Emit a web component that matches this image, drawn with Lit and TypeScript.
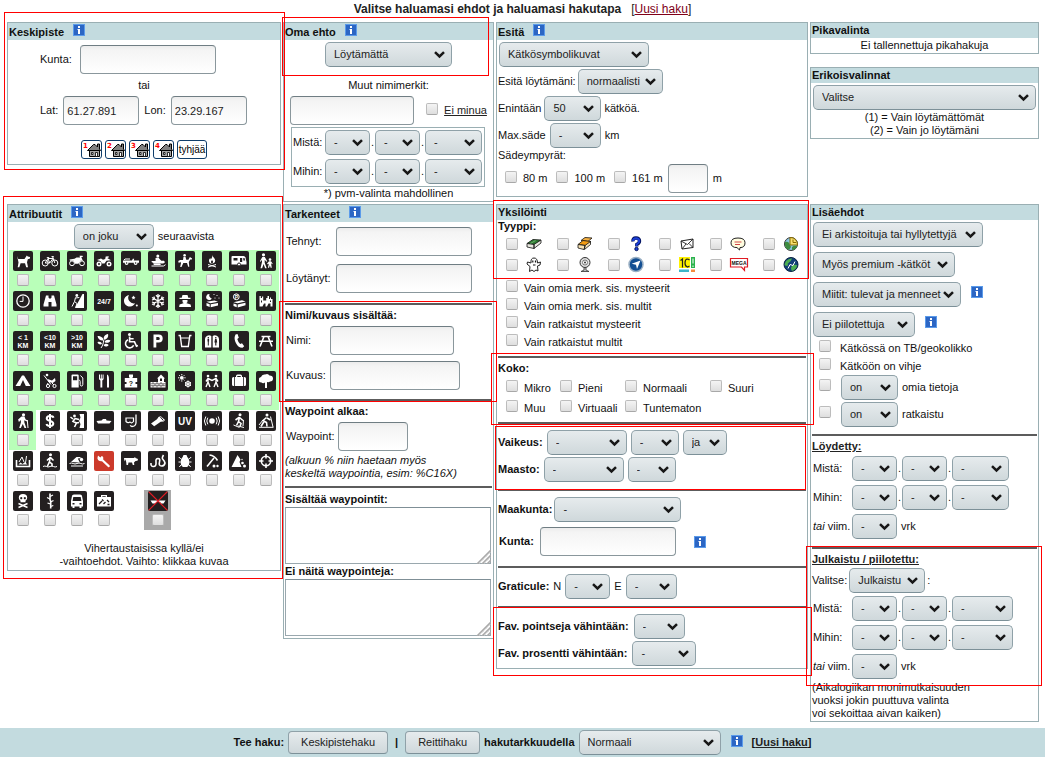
import { LitElement, html, svg, css, nothing } from "lit";
import type { TemplateResult } from "lit";
import { customElement } from "lit/decorators.js";

type Art = ReturnType<typeof svg>;

/* White-on-black attribute pictograms, drawn on a 20 x 20 tile. */
const ART: Record<string, Art> = {
  koira: svg`<path d="M4 5l1.300 3h6.200l2.300-3.500 1 1 2.200.6v1.400l-2.200.7-.8 3.100 1 5h-1.800l-1.200-4H7.600L6.300 16.300H4.700l.8-4.800-.6-3z"/>`,
  polkupyora: svg`<g class="s"><circle cx="5.200" cy="12" r="3"/><circle cx="14.800" cy="12" r="3"/><path d="M5.200 12L8 7.500h5l-3.300 4.500H5.200M8 7.500L9.700 12M12.600 5.600l2.200 6.400M11.500 5.600h2.300M6.800 6.600h2.400"/></g>`,
  moottoripyora: svg`<circle class="s" cx="5" cy="12.300" r="2.400"/><circle class="s" cx="15" cy="12.300" r="2.400"/><path d="M2.500 8.500l5-.8 2-1.300h3.500l-.5-1.600h3l.4 1.200h-1.600l1.600 4-2-.4-2.500 3.200H8L6.500 9.700H3z"/>`,
  monkija: svg`<circle cx="5" cy="13" r="2.500"/><circle cx="15" cy="13" r="2.500"/><path d="M3 9l4-1.500 2 1.200 2.200-.7.5-2.500 3-.3v1.300l-1.500.5 3.800 2.300-4.500.5-2 2.700H8L6.400 10z"/><circle cx="5" cy="13" r="1" fill="#231f20"/><circle cx="15" cy="13" r="1" fill="#231f20"/>`,
  jeeppi: svg`<path d="M2 9.500h9l.8-1.800h1.400L12.800 9.500H18v2.300H2z"/><path class="s" d="M3 9l1-1h5"/><circle cx="5.600" cy="12" r="1.900"/><circle cx="14.600" cy="12" r="1.900"/><circle cx="5.600" cy="12" r=".8" fill="#231f20"/><circle cx="14.600" cy="12" r=".8" fill="#231f20"/>`,
  moottorikelkka: svg`<circle cx="9.800" cy="5" r="1.500"/><path d="M7.500 7l2.800-.5 3 3.200h2.700l1 1.600-1.700 1.300H6.500L3.500 11l.3-1h3.800z"/><path class="s" d="M3.500 15h12l2-1.300"/><path d="M5 12.600h7l1 1.500H6z"/>`,
  hevonen: svg`<circle cx="9.600" cy="4.200" r="1.300"/><path d="M8.500 5.700h2l.7 3h2.200l1.500-2.700 2.200 1.400-.3 1.200-1.500-.2-1.500 2.700.5 4.700h-1.100l-1.200-3.800H8.300L6.500 16H5.200l.8-4-.8-1.300-1.300 1.600-.7-2.200 2-1.200H8z"/>`,
  nuotio: svg`<path d="M10.400 4c.2 2.200 2.800 3.100 2.800 5.500 0 1.800-1.300 3.100-3.200 3.100s-3-1.200-3-2.900c0-1.100.5-1.700 1.200-2.600l.6 1.400C9.800 7 10.600 5.800 10.400 4z"/><path class="s" d="M6 13.500l8 2.500M14 13.500l-8 2.500"/><path d="M10 9c.9 1.100 1.100 1.500 1.100 2.100 0 1.500-2.200 1.500-2.200 0 0-.6.500-1.100 1.100-2.100z" fill="#231f20"/>`,
  asuntoauto: svg`<path d="M2.500 6q0-1 1-1h11q1.500 0 2 1.500l1 4.500v2.500H2.500z"/><path d="M4.500 7h4v2.600h-4zM11 7h2.200v4H11z" fill="#231f20"/><path d="M14.300 7h1.200l.7 2.500h-1.900z" fill="#231f20"/><circle cx="10" cy="13.500" r="1.500" stroke="#231f20"/>`,
  lapset: svg`<circle cx="7.500" cy="3.800" r="1.600"/><path d="M6.300 6h2.500l2.400 4.200-.8.500-1.700-2v3l2 5.600H9.100L7.600 13l-1.500 4.300H4.500L6 11V8.800l-1.300 2-.8-.5z"/><circle cx="14" cy="8.600" r="1.300"/><path d="M13 10.300h2l1.700 2.500-.7.500-1-1.200.8 4.700h-1.200l-.7-2.600-.8 2.600h-1.200l.9-4-1.500.4-.2-.8z"/>`,
  kello: svg`<circle class="s" cx="10" cy="10" r="6.200" stroke-width="1.300"/><path class="s" d="M10 5.500V10.400H6.700"/>`,
  kiikari: svg`<path d="M6 4.500h2.500v2l.7 1h1.600l.7-1v-2H14l2.500 9v2h-5v-4.500H8.500v4.500h-5v-2z"/>`,
  rinne: svg`<path d="M15.500 3H17v14H8z"/><circle cx="9.800" cy="4.500" r="1.400"/><path class="s" d="M8.500 6.500l-1 4 2.500 2-1.300 4M7.500 10.500L5 15.500M8.500 7l3.800-.5"/>`,
  aina: svg`<text x="10" y="12.700" font-size="7" text-anchor="middle">24/7</text>`,
  yo: svg`<path d="M8 4a5.800 5.800 0 1 0 6 8.300A5.600 5.600 0 0 1 8 4z"/><path d="M12.500 4.500l.6 1.300 1.400.2-1 1 .2 1.400-1.200-.7-1.200.7.200-1.400-1-1 1.400-.2z"/><circle cx="15.800" cy="14.500" r="1"/>`,
  lumi: svg`<path class="s" stroke-width="1.300" d="M10 3v14M4 6.500l12 7M16 6.500l-12 7M8 4.200l2 2 2-2M8 15.800l2-2 2 2M4 9l2.500-.900L6 5.500M16 11l-2.500.900.5 2.600M4 11l2.500.900L6 14.500M16 9l-2.500-.900.5-2.600"/>`,
  hattu: svg`<path d="M7.500 4h5l.8 2.700h2.200v1.300h-11V6.700h2.200z"/><path d="M7.500 9h5v1.400q0 1.500-1.500 1.500l4.600 1.600.5 2.500h-12l.5-2.500L9 11.900q-1.500 0-1.500-1.500z"/>`,
  yokatko: svg`<path d="M7.500 3a3 3 0 1 0 2.300 4.500A3.200 3.200 0 0 1 7.500 3z"/><circle cx="12" cy="3.500" r=".6"/><circle cx="15" cy="4.500" r=".6"/><circle cx="13" cy="7" r=".6"/><circle cx="17" cy="7" r=".6"/><path d="M4.500 10.800l8-1.300 3.500 1.300-7.500 1.500zM4.500 12l3.200 1.300v2.700l-3.200-1.300zM8.700 13.300l7.300-1.300v2.500l-7.300 1.800z"/>`,
  parkkikatko: svg`<circle class="s" cx="7.300" cy="5.800" r="2.900"/><text x="7.400" y="7.800" font-size="5" text-anchor="middle">P</text><path d="M4.500 11.300l8.500-2 3.500 1.200-8 1.800zM4.500 12.500l3.200 1v2.800l-3.200-1.300zM8.700 13.500l7.800-1.800v2.500l-7.800 2.300z"/>`,
  rauniot: svg`<path d="M3.500 5h1.300v2h1.200V5.500h1.200V9.500h3V7h1.300V5h1.500v3h1V6.500h1V8H16.500v7.500h-2v-3h-2l-1.500 3h-1.500v-3H8L6.500 15.500h-3z"/><path d="M5 9.500h1v2H5zM14 9.500h1v1.500h-1z" fill="#231f20"/>`,
  km1: svg`<text x="10" y="8.500" font-size="7" text-anchor="middle">&lt; 1</text><text x="10" y="17" font-size="7" text-anchor="middle">KM</text>`,
  km10: svg`<text x="10" y="8.500" font-size="7" text-anchor="middle">&lt;10</text><text x="10" y="17" font-size="7" text-anchor="middle">KM</text>`,
  yli10: svg`<text x="10" y="8.500" font-size="7" text-anchor="middle">&gt;10</text><text x="10" y="17" font-size="7" text-anchor="middle">KM</text>`,
  kasvi: svg`<path d="M9.500 9.500C7 10 4 8.500 3.500 5 7 5 9.500 6.500 9.500 9.500zM10 8.800C9 6 11 3.500 14 3c.8 3-1 5.500-4 5.800zM10.500 11c1-2.500 4-3 6-1.500-1 2.500-4 3-6 1.500zM9.700 14.500c.5-2 3-2.500 5-.5-1.500 2-4 2-5 .5zM8 13c-2 1-4 0-4.500-1.800C5.500 10.300 7.500 11 8 13z"/><path class="s" d="M9.800 9c-.6 3-.6 5-2.800 8"/>`,
  pyoratuoli: svg`<circle cx="8.500" cy="3.600" r="1.500"/><path class="s b" d="M8.600 5.500v5.300h4.900l2 4.400 1.400-.6M8.600 7.800h4M7 8.800a4.200 4.200 0 1 0 5.600 5.400"/>`,
  parkki: svg`<path fill-rule="evenodd" d="M5.500 3.500h5.200q4 0 4 4t-4 4H8.300v5H5.500zM8.300 6v3h2q1.500 0 1.500-1.500T10.300 6z"/>`,
  juoma: svg`<path class="s" stroke-width="1.400" d="M3.500 4.500h1.700l1.500 11h6.600l1.500-11h1.700"/><path class="s" d="M6 7h8"/>`,
  wc: svg`<path d="M3 16.500V8a4 4 0 0 1 6.300-3v11.500zM10.700 16.500V5A4 4 0 0 1 17 8v8.500z"/><path d="M5.500 8h1.600v2.500h-.3v4h-1v-4h-.3zM13 8h1.600l.6 3.500h-.8v3h-1.200v-3h-.8zM5.700 6h1.200v1.400H5.700zM13.200 6h1.200v1.400h-1.200z" fill="#231f20"/>`,
  puhelin: svg`<path d="M6.500 3.500l2-.5 1.300 3.700-1.500 1.200q.7 3 2.900 5l1.800-.7 2.200 3-1.700 1.600Q9.500 17 7 12.300T6.500 3.500z"/>`,
  piknik: svg`<path class="s b" d="M5.500 5.500h9M3 10.200h14M8 5.500l-4 10M12 5.500l4 10"/>`,
  teltta: svg`<path fill-rule="evenodd" d="M9 4.500h2l6.500 10.500h-15zM10 9l-2.800 6h5.600z"/>`,
  rattaat: svg`<circle cx="7" cy="4" r="1.300"/><path d="M7.500 8l4.500 1.500 3-2.500.5 3-2.700 2-4.300-1z"/><path class="s" d="M4 4.500l7 9M8 12l-1 2M12 12l2 2"/><circle class="s" cx="8" cy="15" r="1.600"/><circle class="s" cx="14.500" cy="15" r="1.600"/>`,
  polttoaine: svg`<path fill-rule="evenodd" d="M4.500 4.500q0-1 1-1h5.200q1 0 1 1V16.500H4.500zM6 5.200v4h4.200v-4z"/><path class="s" d="M11.700 9q1.500 0 1.500 1.500v3q0 1.500 1.300 1.500t1.300-1.500V7L13.500 4.500"/>`,
  ruoka: svg`<path d="M5 3.500h1v4h.8v-4h1v4h.8v-4h1V8.300L8.300 9.500v7H6.400v-7L5 8.300zM13 3.500q2 .5 2 5v8h-2z"/>`,
  palapeli: svg`<path d="M8 3.500h4V6l-.8 1h5v4h-1.700v2h1.700v3.500H3.800V13h1.700v-2H3.800V7h5L8 6z"/><text x="10" y="14.500" font-size="7" text-anchor="middle" fill="#231f20">?</text>`,
  talo: svg`<path d="M9 7.500l4-4 4 4h-1v3.500h-6V7.500z"/><path d="M12 7.500h2v2.500h-2z" fill="#231f20"/><path d="M2.500 11h15v5.500h-15z"/><path d="M2.500 12.800h15M2.500 14.700h15M5 11v1.800M9 11v1.800M13 11v1.800M7 12.800v1.900M11 12.800v1.900M15 12.800v1.900M5 14.700v1.800M9 14.700v1.800M13 14.700v1.800" stroke="#231f20" stroke-width=".6"/>`,
  kausi: svg`<circle cx="6.800" cy="6.800" r="1.900"/><path class="s" d="M6.800 3v1.300M6.800 9.300v1.300M3 6.800h1.300M9.300 6.800h1.300M4.200 4.200l.8.800M8.600 8.600l.8.800M9.400 4.200l-.8.800M4.200 9.400l.8-.8"/><path class="s" d="M13 9.500v7M10 11.300l6 3.500M16 11.300l-6 3.500"/><circle class="s" cx="13" cy="13" r="2.500"/>`,
  seura: svg`<circle cx="6" cy="5" r="1.300"/><circle cx="14" cy="5" r="1.300"/><path class="s" stroke-width="1.400" d="M6 7v4l-2 5M6 11l2 5M14 7v4l-2 5M14 11l2 5M4 10.500L6 7.500l4 2 4-2 2 3"/>`,
  laukku: svg`<path fill-rule="evenodd" d="M7 5q0-1.500 1.500-1.500h3Q13 3.500 13 5v1h2.500q1.500 0 1.500 1.500v6q0 1.500-1.500 1.500h-11Q3 15 3 13.500v-6Q3 6 4.500 6H7zM8.300 5v1h3.400V5z"/><path d="M5.500 6v9M14.500 6v9" stroke="#231f20" stroke-width=".8"/>`,
  puu: svg`<path d="M9 17v-5.500Q7 13 5.500 11.500 2.500 11.500 3 9q-.5-2.500 2-3Q6 3 9 3.500q3-1.500 4.500 1Q17 4.500 17 7.500q0 3-3 3-1 1-3 .5V17z"/>`,
  retki: svg`<circle cx="10.500" cy="3.800" r="1.600"/><path d="M8.500 5.500h3l1 2.800 2 1.200-.5 1-2.700-1.300v2l2 5.800h-1.800L9.800 13l-2 4H6.200l1.700-5.500V9l-2 2-.8-2.500z"/><path class="s" d="M14.300 9l.7 8"/>`,
  maksu: svg`<path class="s" stroke-width="2" d="M13.500 6.700Q13 5 10 5T6.700 7.300q0 2 3.300 2.700t3.300 2.800Q13 15 10 15t-3.500-2M10 3v14"/>`,
  kiipeily: svg`<path d="M12.500 3h4.500v14h-4.500l1-4-1.500-3 1.500-3.500z"/><circle cx="7.500" cy="5" r="1.400"/><path class="s b" d="M8 7.500l-2 3 3.500 1.500L7.500 16M8 7.500l4 1M6 8L3.500 6M9.500 12l2.500-.5"/>`,
  vene: svg`<path d="M2.500 10l5-.5L9 8h3l.5 1.500 5 .5-2 2.500H4z"/>`,
  snorkkeli: svg`<path class="s" stroke-width="1.200" d="M5 7h7.500v3.500q-2 2.500-3.500.5-2 1.500-4-.500z"/><path class="s" stroke-width="1.300" d="M15 3.500v8.500q-.5 3.500-4 3.500L9 14.500"/>`,
  lamppu: svg`<path d="M3 12.500l6-4.200 1.500-2.300 2-1L17 9l-1.300 1.600-3 .2-6.500 4.500z"/><path d="M12 5.500l3.300 4" stroke="#231f20"/>`,
  uv: svg`<text x="10" y="13.500" font-size="10" text-anchor="middle">UV</text>`,
  majakka: svg`<circle cx="10" cy="10" r="2.800"/><path class="s" d="M5.800 6.700q-2 3.300 0 6.600M14.200 6.700q2 3.300 0 6.600M3.800 5.500q-2.800 4.500 0 9M16.200 5.500q2.800 4.500 0 9"/>`,
  lumikenka: svg`<circle cx="11" cy="3.700" r="1.500"/><path class="s b" d="M10.500 6l-1 4.500 2.500 2-1 3M9.500 10.500l-2 4M10 6.500L6.500 9M10.500 6.500l3.500 3"/><path class="s" d="M4.500 14l6 2.500M9 15l6 1.500M14.500 9l-.5 6"/>`,
  hiihto: svg`<circle cx="11" cy="4" r="1.500"/><path class="s b" d="M10.500 6.500L7 9.500l3.500 2 .5 4M8 10.500l-3 5M11 7l3.500 2"/><path class="s" d="M14.500 5.500L17 16M7 9L3 14M3 16.300h14.500"/>`,
  kahluu: svg`<path class="s b" d="M3.500 9v6.500h13V9"/><path d="M5.500 13.500l2-2 2 1.500 2.500-2 2.500 2.500z"/><path class="s" d="M6 11l3-5 2 5M13.500 5l-1 7"/>`,
  vesi: svg`<circle cx="10.500" cy="3.800" r="1.500"/><path class="s b" d="M10 6l-.5 5 2.500 2v2.500M9.500 10.500l-2.200 5M10 6.500L7 9.500M10.500 6.500l3 3"/><path class="s" d="M3 15.500q2-1 3.500 0t3.500 0 3.500 0 3.500 0"/>`,
  uinti: svg`<circle cx="14.500" cy="8.500" r="1.700"/><path d="M4 11l5.500-5h4v1.300l-2.700.3 2 3.900z"/><path class="s" d="M2.500 12.500q2-1 3.700 0t3.800 0 3.800 0 3.700 0M4 15h12"/>`,
  huolto: svg`<path d="M4 4.500l2.300 2L8 4.800q2 1.500 1.200 3.700l6.500 6q.6 2-1.400 1.700L8 10.200q-4 .4-4.600-2.900z"/>`,
  lehma: svg`<path d="M3 7h10l1-1 .5 1 2.500 1-.5 1.700-2 .3-1.500 1.500.3 2.500h-1.500l-.8-2.500h-3.500l-.5 2.500H5.500L5.200 11 4.300 8.300l-.8 2.200z"/>`,
  kaarme: svg`<path class="s b" d="M3 12q-.5 3.500 2.500 3.500 3 0 2.500-4.500-.5-3.500 2-3.500t1.500 3.500q-1 4 2 4t3.500-3q-.5-2-2-3.500t.5-4.500"/>`,
  punkki: svg`<path d="M8.500 4h3l.8 2q2.200 2 2.200 5t-2.300 5H7.800q-2.300-2-2.300-5t2.200-5z"/><path class="s" d="M5.800 8L3.800 6M14.200 8l2-2M5.500 11H3.500M14.500 11h2M6 14l-1.700 2M14 14l1.700 2"/>`,
  kaivos: svg`<path class="s b" d="M12 7l-7 8.500M7.500 4q5 .5 8 5.500"/><circle cx="12" cy="15" r="1.500"/><circle cx="15.500" cy="15" r="1.200"/>`,
  kivivyory: svg`<path d="M8.500 4l3 4.500-1 2.500 2 5H2.500z"/><circle cx="13.500" cy="12" r="1.300"/><circle cx="15.500" cy="15" r="1.500"/><circle cx="13" cy="8.500" r=".7"/>`,
  metsastys: svg`<circle class="s b" cx="10" cy="10" r="4.700"/><path class="s b" d="M10 3v4.500M10 12.500V17M3 10h4.500M12.500 10H17"/>`,
  kallo: svg`<path fill-rule="evenodd" d="M10 3q4.200 0 4.200 3.700 0 2-1.700 3v1.500h-5V9.700q-1.700-1-1.700-3Q5.800 3 10 3zM8.200 6a1.100 1.100 0 1 0 .1 0zM11.800 6a1.100 1.100 0 1 0 .1 0z"/><path class="s" stroke-width="1.400" d="M5.500 12.500l9 4M14.500 12.500l-9 4"/>`,
  piikit: svg`<path class="s b" d="M10 2.500v6l.7 2v7"/><path class="s" stroke-width="1.300" d="M10 5.500l3-1.500M10 8L7 6.500M10.500 11l3-1.500M10.500 13L7.500 12M10.500 15.500l2.800-1"/>`,
  bussi: svg`<path fill-rule="evenodd" d="M5 5q0-1.500 2-1.500h6q2 0 2 1.500l1 5v5.500h-1.500V17h-2v-1.500h-5V17h-2v-1.500H4V10zM6.300 6l-.7 4h8.800l-.7-4zM5.500 12v1.500h2V12zM12.500 12v1.500h2V12z"/>`,
  tyokalut: svg`<path fill-rule="evenodd" d="M7 6V4h6v2h4v9.500H3V6zM8.300 6h3.400V5.200H8.300z"/><path d="M5 13l3-3M9.500 13l2-2M8 8.500l1.500 1.500M13 9l2 2M13.500 13.500h2" stroke="#231f20" stroke-width="1.300"/>`,
  eivene: svg`<path d="M2.500 9.500h15l-2 3H13l-1-1.500H8.500L7.500 12.500h-3z"/><path d="M.5.500l19 19M19.500.500l-19 19" stroke="#e01b24" stroke-width="1.100"/>`,
};

const ROWS: string[][] = [
  ["koira", "polkupyora", "moottoripyora", "monkija", "jeeppi", "moottorikelkka", "hevonen", "nuotio", "asuntoauto", "lapset"],
  ["kello", "kiikari", "rinne", "aina", "yo", "lumi", "hattu", "yokatko", "parkkikatko", "rauniot"],
  ["km1", "km10", "yli10", "kasvi", "pyoratuoli", "parkki", "juoma", "wc", "puhelin", "piknik"],
  ["teltta", "rattaat", "polttoaine", "ruoka", "palapeli", "talo", "kausi", "seura", "laukku", "puu"],
  ["retki", "maksu", "kiipeily", "vene", "snorkkeli", "lamppu", "uv", "majakka", "lumikenka", "hiihto"],
  ["kahluu", "vesi", "uinti", "huolto", "lehma", "kaarme", "punkki", "kaivos", "kivivyory", "metsastys"],
  ["kallo", "piikit", "bussi", "tyokalut", "", "eivene"],
];

/* Cache type symbols, 16 x 16. */
const TYPES: [string, Art][] = [
  ["Tradi", svg`<path d="M1 7.500l6-4 8 .500-6 4.500z" fill="#2e7d32" stroke="#111" stroke-width=".8"/><path d="M1 7.500v3.500l7 1.500V8.500zM8 8.500v4l7-5.500V4z" fill="#e8e8e0" stroke="#111" stroke-width=".8"/><path d="M4.500 7.500l5-3" stroke="#6cae6c"/>`],
  ["Multi", svg`<path d="M4 4.500l4-3 7 .500-4 3.500z" fill="#f5b041" stroke="#111" stroke-width=".8"/><path d="M1 8.500l5-4 8 1-5 4z" fill="#f39c12" stroke="#111" stroke-width=".8"/><path d="M1 8.500v3.500l6 1.500 1-4zM8 9.500L7.500 13.500l6-5v-3z" fill="#f7e3b5" stroke="#111" stroke-width=".8"/>`],
  ["Mysteeri", svg`<path d="M5 5.500Q4.500 2 8 2t3.500 3Q11.500 7 8.800 8.500V10.500" fill="none" stroke="#00115c" stroke-width="3.400"/><path d="M5 5Q5 2.200 8 2.200t3.300 2.800Q11.300 7 8.600 8.500V10" fill="none" stroke="#1c3fd8" stroke-width="2"/><circle cx="8.500" cy="13" r="1.700" fill="#1c3fd8" stroke="#00115c"/>`],
  ["Kirje", svg`<path d="M2 5l12-2v8.500L3 13z" fill="#fff" stroke="#222"/><path d="M2 5l6.500 3.500L14 3M3 13l4-5M14 11.500L10 7.500" fill="none" stroke="#222" stroke-width=".9"/>`],
  ["Miitti", svg`<path d="M8 2q7 0 7 4.800t-5 4.800l-.5 2.400L7 11.600Q1 11.600 1 6.800T8 2z" fill="#fffde0" stroke="#222"/><path d="M4.500 6h7M5 8.500h5" stroke="#d04848"/>`],
  ["Earth", svg`<circle cx="8" cy="8" r="6.500" fill="#8bc4e0" stroke="#333"/><path d="M2 6q3-1 4 1t2 4q-2 4-4 2-3-3-2-7z" fill="#3d8b40"/><path d="M7 1.500q7 0 7.500 7.500H7z" fill="#f8e070" stroke="#8a6d00"/><path d="M10 3.500v3h3" fill="none" stroke="#8a6d00"/><path d="M9 14q4 0 5-4-3-1-5 1z" fill="#3d8b40"/>`],
  ["Virtuaali", svg`<path d="M5 6q-.5-5 3-5t3.500 5l3-1-.5 3-2.500 1 .5 5-2-1-2 1.500L6 13l-2.500 1.500L4 9.500 1 7l.5-2z" fill="#fff" stroke="#222"/><path d="M6.800 3.500v2M9.500 3.500v2M7 8h2.500" stroke="#111" stroke-width="1.200"/>`],
  ["Webcam", svg`<circle cx="8" cy="5.500" r="5" fill="#ddd" stroke="#333"/><circle cx="8" cy="5.500" r="2.500" fill="#fff" stroke="#777"/><circle cx="8" cy="5.500" r="1" fill="#333"/><path d="M7 10.500h2v2.500l3 1.500H4L7 13z" fill="#bbb" stroke="#333" stroke-width=".8"/>`],
  ["Wherigo", svg`<circle cx="8" cy="7.500" r="7" fill="#134f93" stroke="#9bb0c4" stroke-width="1.500"/><path d="M12.500 3.500L9 12l-1-4.300-4.300-.900z" fill="#fff"/>`],
  ["10 vuotta", svg`<path d="M0 0h11v11H0z" fill="#fff200"/><path d="M12 0h4v11h-4z" fill="#2bb24c"/><path d="M0 12.500h10v2.500H0z" fill="#3db5c8"/><path d="M12 12.500h4v2.500h-4z" fill="#f58a3c"/><path d="M1.500 3.500L3.500 2v8.500M10.500 3Q9.500 2 8 2 6 2.500 6 6t2.500 4l2-1" fill="none" stroke="#222" stroke-width="1.200"/><path d="M14 1.500v5M14 8.500v1.500" stroke="#fff"/>`],
  ["Mega", svg`<path d="M.5 1.500h17v8.500h-3v3.500L11.500 10H.5z" fill="#fff" stroke="#e01b24" stroke-width="1.200"/><text x="9" y="8" font-size="5" font-weight="bold" text-anchor="middle" fill="#111">MEGA</text>`],
  ["Lab", svg`<circle cx="8" cy="7.500" r="7" fill="#123f78" stroke="#0a2342"/><path d="M3 4Q6 1 9 1.500q-1 3-3 4t-1 3q-3 1-3.500-1zM9 14q-2-3 0-5t5-1q0 4-5 6z" fill="#4caf50"/><path d="M5 11.500l2-4 3 1 2-4" fill="none" stroke="#fff"/>`],
];

const infoIcon = html`<svg class="info" viewBox="0 0 12 12" role="img" aria-label="Ohje">
  <rect width="12" height="12" fill="#5b9bea"/><rect x="1" y="1" width="10" height="10" fill="#2c66c4"/>
  <path d="M5 2h2v2H5zM4.500 5H7v5H5V6h-.5z" fill="#fff"/></svg>`;

const mark = (name: string) => html`<span class="mark ${name}" aria-hidden="true"></span>`;

const head = (title: string, info = false) =>
  html`<h2 class="head ${info ? "tall" : ""}"><span>${title}</span>${info ? infoIcon : nothing}</h2>`;

const pick = (width: string, label: string, value = "-", id = "") =>
  html`<select class=${width} id=${id || nothing} aria-label=${label}><option>${value}</option></select>`;

const tick = (text: string | TemplateResult) =>
  html`<label class="tick"><input type="checkbox" /><span>${text}</span></label>`;

const dates = (label: string, last: string) => html`<div class="dates">
  <span class="datelabel">${label}</span>${pick("w45", `${label} päivä`)}<span class="dot">.</span>${pick("w45", `${label} kuukausi`)}<span class="dot">.</span>${pick(last, `${label} vuosi`)}
</div>`;

const area = (id: string) => html`<div class="area"><textarea id=${id}></textarea>
  <svg class="grip" viewBox="0 0 15 14" aria-hidden="true"><path d="M1 14L15 0M6 14l9-9M11 14l4-4" stroke="#aaa" stroke-width="1.600"/><path d="M3 14L15 2M8 14l7-7" stroke="#ccc" stroke-width=".8" stroke-dasharray="1 1"/></svg></div>`;

@customElement("app-root")
export class AppRoot extends LitElement {
  static styles = css`
    :host { display: block; background: #fff; color: #111; font: 11px/13px "Liberation Sans", Arial, sans-serif; }
    * { box-sizing: border-box; }
    a { color: #222; }
    .title { margin: 0 0 4px; font-size: 12px; line-height: 18px; color: #222; display: flex; justify-content: center; gap: 10px; }
    .title .new { font-weight: normal; }
    .title a { color: #800018; }
    .board { display: grid; grid-template-columns: 274fr 211fr 312fr 229fr; gap: 2px; padding: 0 6px 0 7px; align-items: start; }
    .stack { display: flex; flex-direction: column; gap: 13px; }
    .panel { position: relative; border: 1px solid #9aafb3; min-width: 0; padding-bottom: 1px; }
    .pb2 { padding-bottom: 2px; }
    .pb3 { padding-bottom: 3px; }
    .pb5 { padding-bottom: 5px; }
    .head { margin: 0; background: #c3dbdf; font-size: 11px; line-height: 15px; height: 15px; padding-left: 1px; display: flex; gap: 9px; align-items: flex-end; }
    .tall { height: 17px; }
    .tall .info { margin-bottom: 4px; }
    .info { width: 12px; height: 12px; flex: none; display: block; }
    .body { padding: 0 1px; }
    .row { display: flex; align-items: center; gap: 3px; white-space: nowrap; }
    .center { justify-content: center; text-align: center; }
    .indent { padding-left: 31px; }
    .pad1 { padding-left: 1px; }
    .line { border: 0; height: 2px; background: #5c5c5c; margin: 7px 0 0; }
    .m1 { margin-top: 1px; } .m2 { margin-top: 2px; } .m3 { margin-top: 3px; } .m4 { margin-top: 4px; }
    .m5 { margin-top: 5px; } .m6 { margin-top: 6px; } .m8 { margin-top: 8px; } .m9 { margin-top: 9px; }
    .m10 { margin-top: 10px; } .m12 { margin-top: 12px; } .m15 { margin-top: 15px; }
    .g2 { gap: 2px; } .g4 { gap: 4px; } .g5 { gap: 5px; } .g6 { gap: 6px; } .g8 { gap: 8px; } .g10 { gap: 10px; } .g12 { gap: 12px; }
    .sub { margin: 0; font-size: 11px; line-height: 13px; padding-top: 4px; }
    .sub15 { line-height: 15px; }
    .flush { padding-top: 0; }
    .under { text-decoration: underline; color: #222; }
    .group { position: relative; }
    select, input, textarea, button { font: inherit; color: #222; margin: 0; }
    select { appearance: none; height: 25px; padding: 0 0 0 8px; border: 1px solid #8fa1a8; border-bottom-color: #7c9098; border-radius: 5px; flex: none;
      background: url("data:image/svg+xml,%3Csvg xmlns='http://www.w3.org/2000/svg' width='11' height='8'%3E%3Cpath d='M1 1.200l4.500 4.300 4.500-4.300' fill='none' stroke='%23181818' stroke-width='2.500'/%3E%3C/svg%3E") no-repeat right 6px center, linear-gradient(#e6ebed, #cfd8db); }
    .text { height: 29px; padding: 0 3px; border: 1px solid #8a979c; border-top-color: #6f7d83; border-radius: 4px; flex: none; background: linear-gradient(#ececec, #f4f4f4 4px, #fff); }
    .w40 { width: 40px; } .w44 { width: 44px; } .w45 { width: 45px; } .w48 { width: 48px; } .w51 { width: 51px; } .w57 { width: 57px; }
    .w61 { width: 61px; } .w64 { width: 64px; } .w70 { width: 70px; } .w76 { width: 76px; } .w80 { width: 80px; } .w85 { width: 85px; }
    .w102 { width: 102px; } .w124 { width: 124px; } .w127 { width: 127px; } .w130 { width: 130px; } .w136 { width: 136px; }
    .w142 { width: 142px; } .w148 { width: 148px; } .w150 { width: 150px; } .w170 { width: 170px; }
    .wide { flex: 1; width: 0; margin: 0 1px; }
    input[type="checkbox"] { appearance: none; width: 12px; height: 12px; border: 1px solid #bcbcbc; border-bottom-color: #a8a8a8; border-radius: 2px; background: linear-gradient(#f4f4f4, #dedede); flex: none; display: block; }
    .tick { display: flex; align-items: center; gap: 6px; }
    .tick input { margin-bottom: 4px; }
    .ticks { padding-left: 8px; }
    .ticks .tick { height: 18px; }
    .circles { display: flex; align-items: center; gap: 9px; padding-left: 7px; white-space: nowrap; }
    .sizes { display: grid; grid-template-columns: 54px 65px 85px auto; grid-auto-rows: 20px; padding-left: 8px; }
    .types { display: grid; grid-template-columns: repeat(4, 51px) 53px auto; grid-auto-rows: 21px; padding-left: 8px; }
    .types .type { display: flex; align-items: center; gap: 8px; }
    .type svg { width: 16px; height: 16px; overflow: visible; }
    .homes { display: flex; justify-content: center; gap: 3px; }
    .home { width: 21px; height: 19px; padding: 0; border: 1px solid #0f3d6b; border-radius: 3px; background: #fff; }
    .home svg { display: block; width: 19px; height: 17px; }
    .clear { width: 30px; font-size: 10px; line-height: 15px; color: #000; }
    .datebox { border: 1px solid #9aafb3; width: 194px; margin: 2px auto 0 7px; padding: 2px 1px; display: flex; flex-direction: column; gap: 4px; }
    .dates { display: flex; align-items: center; }
    .datelabel { width: 32px; }
    .dot { width: 5px; text-align: center; }
    .wideDates { display: flex; flex-direction: column; gap: 4px; padding-left: 1px; }
    .wideDates .datelabel { width: 39px; }
    .unit { margin-left: 4px; }
    .attrs { width: 270px; margin: 1px auto 0 1px; display: grid; grid-template-columns: repeat(10, 27px); grid-auto-rows: 40px; }
    .cell { display: flex; flex-direction: column; align-items: center; padding-top: 1px; gap: 3px; }
    .cell.green { background: #b9ffb9; }
    .cell.grey { background: #a9a9a9; }
    .tile { width: 20px; height: 20px; border-radius: 2px; background: #231f20; fill: #fff; font: bold 7px/8px "Liberation Sans", Arial, sans-serif; display: block; }
    .tile.red { background: #cc3a2b; }
    .tile .s { fill: none; stroke: #fff; }
    .tile .b { stroke-width: 1.600; }
    .form { display: grid; align-items: center; justify-content: start; padding-left: 1px; }
    .makers { grid-template-columns: 50px auto; row-gap: 8px; }
    .names { grid-template-columns: 44px auto; row-gap: 6px; }
    .note { font-style: italic; }
    .area { position: relative; margin-right: 1px; }
    textarea { display: block; width: 100%; height: 57px; border: 1px solid #9aa8ae; border-top-color: #7f8f96; background: #fff; resize: none; }
    .grip { position: absolute; right: 0; bottom: 0; width: 15px; height: 14px; fill: none; }
    .picks { display: flex; flex-direction: column; gap: 5px; padding-left: 1px; }
    .picks .info { margin-bottom: 6px; }
    .away { margin-left: 12px; }
    .extras { padding-left: 7px; }
    .extras .tick { height: 18px; gap: 9px; }
    .extras .own { height: auto; gap: 10px; }
    .own input { margin-bottom: 6px; }
    .foot { margin-top: 6px; background: #c3dbdf; padding: 2px 0; font-weight: bold; display: flex; align-items: center; justify-content: center; gap: 4px; white-space: nowrap; }
    .foot select, .foot button { font-weight: normal; height: 25px; }
    .foot button { border: 1px solid #8fa1a8; border-bottom-color: #7c9098; border-radius: 4px; background: linear-gradient(#e6ebed, #cfd8db); padding: 0 12px; height: 23px; }
    .foot .info { margin: 0 5px 4px 6px; }
    .bar { padding: 0 3px; }
    .mark { position: absolute; border: 1px solid #f00; pointer-events: none; z-index: 1; }
    .mk-center { inset: -11px -5px -6px -4px; }
    .mk-own { inset: -6px 4px auto -2px; height: 59px; }
    .mk-attrs { inset: -9px -3px -9px -5px; }
    .mk-name { inset: -2px -5px -1px -6px; }
    .mk-type { inset: -5px -2px -4px -4px; }
    .mk-size { inset: -3px -8px -1px -7px; }
    .mk-terrain { inset: -4px 0 1px -3px; }
    .mk-fav { inset: 1px -6px -10px -5px; }
    .mk-date { inset: -1px -5px -7px -6px; }
  `;

  private homes() {
    return html`<div class="homes m15">
      ${[1, 2, 3, 4].map((n) => html`<button class="home" aria-label="Koti ${n}"><svg viewBox="0 0 19 17">
        <path d="M5.500 9.500L11.500 3.500h1.500l2.500 2.500V3h2v5l1 1.500z" fill="#808080" stroke="#000"/><path d="M7.500 9.500h10v6h-10z" fill="#a8a8a8" stroke="#000"/>
        <path d="M9.500 11.500h1.500v2H9.500zM13.500 11.500h2v4h-2z" fill="#fff" stroke="#000" stroke-width=".8"/>
        <text x="1" y="7" font-family="DejaVu Sans" font-size="7" font-weight="bold" fill="#f00">${n}</text></svg></button>`)}
      <button class="home clear">tyhjää</button>
    </div>`;
  }

  private attributes() {
    return html`<div class="attrs">${ROWS.map((row, r) => row.map((name, c) => {
      const tone = r < 4 || (r === 4 && c === 0) ? "green" : name === "eivene" ? "grey" : "";
      return html`<label class="cell ${tone}">${name ? html`<svg class="tile ${name === "huolto" ? "red" : ""}" viewBox="0 0 20 20" role="img" aria-label=${name}>${ART[name]}</svg><input type="checkbox" />` : nothing}</label>`;
    }))}</div>`;
  }

  render() {
    return html`
      <h1 class="title"><span>Valitse haluamasi ehdot ja haluamasi hakutapa</span><span class="new">[<a href="#uusi">Uusi haku</a>]</span></h1>
      <main class="board">
        <section class="panel pb5">${head("Keskipiste", true)}
          <div class="body">
            <div class="row indent g8 m5"><label for="kunta">Kunta:</label><input class="text w136" id="kunta" /></div>
            <div class="row center m5">tai</div>
            <div class="row indent g5 m4"><label for="lat">Lat:</label><input class="text w76" id="lat" value="61.27.891" /><label for="lon">Lon:</label><input class="text w76" id="lon" value="23.29.167" /></div>
            ${this.homes()}
          </div>${mark("mk-center")}
        </section>

        <section class="panel">${head("Oma ehto", true)}
          <div class="row center m2">${pick("w127", "Oma ehto", "Löytämättä")}</div>
          <div class="row center m12"><label for="muut">Muut nimimerkit:</label></div>
          <div class="row center g12 m4"><input class="text w124" id="muut" />${tick(html`<a href="#eiminua">Ei minua</a>`)}</div>
          <div class="datebox">${dates("Mistä:", "w57")}${dates("Mihin:", "w57")}</div>
          <div class="row center">*) pvm-valinta mahdollinen</div>
          ${mark("mk-own")}
        </section>

        <section class="panel pb3">${head("Esitä", true)}
          <div class="body">
            <div class="row pad1 m2">${pick("w150", "Esitä", "Kätkösymbolikuvat")}</div>
            <div class="row g2 m2"><label for="loyt">Esitä löytämäni:</label>${pick("w85", "Esitä löytämäni", "normaalisti", "loyt")}</div>
            <div class="row m2"><label for="max">Enintään</label>${pick("w57", "Enintään", "50", "max")}<span>kätköä.</span></div>
            <div class="row g4 m2"><label for="sade">Max.säde</label>${pick("w51", "Max.säde", "-", "sade")}<span>km</span></div>
            <div class="row m1">Sädeympyrät:</div>
            <div class="circles m2">${tick("80 m")}${tick("100 m")}<span class="row g5">${tick("161 m")}<label class="row g5"><input class="text w40" aria-label="Oma säde" />m</label></span></div>
          </div>
        </section>

        <div class="stack">
          <section class="panel">${head("Pikavalinta")}<div class="row center m1">Ei tallennettuja pikahakuja</div></section>
          <section class="panel">${head("Erikoisvalinnat")}
            <div class="body">
              <div class="row m2">${pick("wide", "Erikoisvalinnat", "Valitse")}</div>
              <div class="row center m1">(1) = Vain löytämättömät<br />(2) = Vain jo löytämäni</div>
            </div>
          </section>
        </div>

        <section class="panel pb2">${head("Attribuutit", true)}
          <div class="row center g4 m2">${pick("w80", "Attribuuteista", "on joku")}<span>seuraavista</span></div>
          ${this.attributes()}
          <div class="row center m12">Vihertaustaisissa kyllä/ei<br />-vaihtoehdot. Vaihto: klikkaa kuvaa</div>
          ${mark("mk-attrs")}
        </section>

        <section class="panel pb2">${head("Tarkenteet", true)}
          <div class="body">
            <div class="form makers m5"><label for="tehnyt">Tehnyt:</label><input class="text w136" id="tehnyt" /><label for="loytanyt">Löytänyt:</label><input class="text w136" id="loytanyt" /></div>
            <div class="group"><hr class="line m10" />
              <h3 class="sub">Nimi/kuvaus sisältää:</h3>
              <div class="form names m4"><label for="nimi">Nimi:</label><input class="text w124" id="nimi" /><label for="kuvaus">Kuvaus:</label><input class="text w130" id="kuvaus" /></div>
              <hr class="line m9" />${mark("mk-name")}
            </div>
            <h3 class="sub">Waypoint alkaa:</h3>
            <div class="row pad1 m4"><label for="wp">Waypoint:</label><input class="text w70" id="wp" /></div>
            <div class="note m3">(alkuun % niin haetaan myös<br />keskeltä waypointia, esim: %C16X)</div>
            <hr class="line m6" />
            <h3 class="sub sub15"><label for="sis">Sisältää waypointit:</label></h3>${area("sis")}
            <h3 class="sub flush sub15"><label for="ein">Ei näitä waypointeja:</label></h3>${area("ein")}
          </div>
        </section>

        <section class="panel pb2">
          <div class="group">${head("Yksilöinti")}
            <div class="body"><h3 class="sub flush">Tyyppi:</h3>
              <div class="types">${TYPES.map(([name, art]) => html`<label class="type"><input type="checkbox" /><svg viewBox="0 0 16 16" role="img" aria-label=${name}>${art}</svg></label>`)}</div>
            </div>${mark("mk-type")}
          </div>
          <div class="body">
            <div class="ticks m4">${["Vain omia merk. sis. mysteerit", "Vain omia merk. sis. multit", "Vain ratkaistut mysteerit", "Vain ratkaistut multit"].map((t) => tick(t))}</div>
            <div class="group"><hr class="line m5" />
              <h3 class="sub">Koko:</h3>
              <div class="sizes m3">${["Mikro", "Pieni", "Normaali", "Suuri", "Muu", "Virtuaali", "Tuntematon"].map((t) => tick(t))}</div>
              <hr class="line m4" />${mark("mk-size")}
            </div>
            <div class="group">
              <div class="row g4 m6"><b>Vaikeus:</b>${pick("w80", "Vaikeus")}${pick("w48", "Vaikeus vertailu")}${pick("w44", "Ehtojen yhdistys", "ja")}</div>
              <div class="row g4 m2"><b>Maasto:</b>${pick("w80", "Maasto")}${pick("w48", "Maasto vertailu")}</div>
              <hr class="line" />${mark("mk-terrain")}
            </div>
            <div class="row g2 m6"><b>Maakunta:</b>${pick("w127", "Maakunta")}</div>
            <div class="row pad1 g6 m5"><label for="kunta2"><b>Kunta:</b></label><input class="text w136" id="kunta2" /><span class="away">${infoIcon}</span></div>
            <hr class="line m10" />
            <div class="row g4 m6"><b>Graticule:</b> N ${pick("w45", "Pohjoinen")} E ${pick("w51", "Itä")}</div>
            <div class="group"><hr class="line" />
              <div class="row g5 m6"><label for="fp"><b>Fav. pointseja vähintään:</b></label>${pick("w51", "Fav. pointseja", "-", "fp")}</div>
              <div class="row g5 m2"><label for="fpr"><b>Fav. prosentti vähintään:</b></label>${pick("w64", "Fav. prosentti", "-", "fpr")}</div>
              ${mark("mk-fav")}
            </div>
          </div>
        </section>

        <section class="panel">${head("Lisäehdot")}
          <div class="body">
            <div class="picks m2">
              ${pick("w170", "Arkistoidut", "Ei arkistoituja tai hyllytettyjä")}
              ${pick("w142", "Premium", "Myös premium -kätköt")}
              <div class="row g10">${pick("w148", "Miitit", "Miitit: tulevat ja menneet")}${infoIcon}</div>
              <div class="row g10">${pick("w102", "Piilotetut", "Ei piilotettuja")}${infoIcon}</div>
            </div>
            <div class="extras m2">${tick("Kätkössä on TB/geokolikko")}${tick("Kätköön on vihje")}
              <div class="row tick own"><input type="checkbox" aria-label="Omia tietoja" /><span class="row g4">${pick("w57", "Omat tiedot", "on")}<span>omia tietoja</span></span></div>
              <div class="row tick own m2"><input type="checkbox" aria-label="Ratkaistu" /><span class="row g4">${pick("w57", "Ratkaisu", "on")}<span>ratkaistu</span></span></div>
            </div>
            <hr class="line" />
            <h3 class="sub under">Löydetty:</h3>
            <div class="wideDates m3">${dates("Mistä:", "w57")}${dates("Mihin:", "w57")}
              <div class="dates"><span class="datelabel"><i>tai</i> viim.</span>${pick("w45", "Löydetty viimeisen vrk aikana")}<span class="unit">vrk</span></div></div>
            <div class="group"><hr class="line m8" />
              <h3 class="sub under">Julkaistu / piilotettu:</h3>
              <div class="row g2 m2"><label for="jul">Valitse:</label>${pick("w76", "Valitse", "Julkaistu", "jul")}<span>:</span></div>
              <div class="wideDates m3">${dates("Mistä:", "w61")}${dates("Mihin:", "w61")}
                <div class="dates"><span class="datelabel"><i>tai</i> viim.</span>${pick("w45", "Julkaistu viimeisen vrk aikana")}<span class="unit">vrk</span></div></div>
              ${mark("mk-date")}
            </div>
            <div class="m2">(Aikalogiikan monimutkaisuuden<br />vuoksi jokin puuttuva valinta<br />voi sekoittaa aivan kaiken)</div>
          </div>
        </section>
      </main>
      <footer class="foot"><span>Tee haku:</span><button>Keskipistehaku</button><span class="bar">|</span><button>Reittihaku</button>
        <label for="tark">hakutarkkuudella</label>${pick("w142", "hakutarkkuudella", "Normaali", "tark")}${infoIcon}<span>[<a href="#uusi">Uusi haku</a>]</span></footer>
    `;
  }
}
